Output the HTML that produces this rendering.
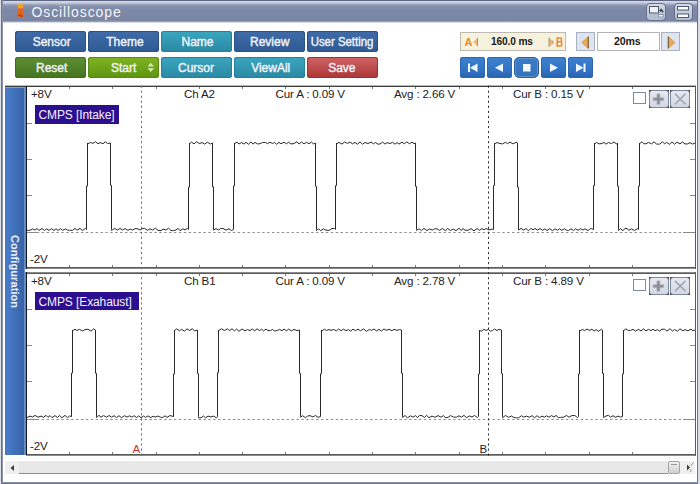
<!DOCTYPE html>
<html><head><meta charset="utf-8">
<style>
*{margin:0;padding:0;box-sizing:border-box}
html,body{width:700px;height:484px;overflow:hidden;background:#dcdfe6;font-family:"Liberation Sans",sans-serif}
.abs{position:absolute}
#win{position:absolute;left:0;top:0;width:700px;height:484px;background:linear-gradient(90deg,#dcdfe6 0,#dcdfe6 1px,#fff 1px,#fff 698px,#dcdfe6 698px)}
#title{position:absolute;left:3px;top:0;width:694px;height:23px;
 background:linear-gradient(#606888 0,#606888 1px,#d6dae6 1px,#c4cad8 3px,#9ea6bc 4.5px,#8692ae 6px,#7c88a6 10px,#7a86a4 21px,#b8c0d0 22px,#f4f5f8 23px)}
#title .t{position:absolute;left:28.5px;top:4px;font-size:14px;letter-spacing:0.9px;color:#f4f6fa;line-height:16px}
.lb{position:absolute;left:1px;top:0;width:2px;height:484px;background:linear-gradient(90deg,#69728e 0,#69728e 1px,#8a92aa 1px)}
.rb{position:absolute;left:697px;top:0;width:2px;height:484px;background:linear-gradient(90deg,#69728e 0,#69728e 1px,#d4d8e2 1px)}
.bb{position:absolute;left:1px;top:482px;width:697px;height:2px;background:linear-gradient(#8a92aa 0,#8a92aa 1px,#69728e 1px)}
.btn{position:absolute;width:71px;height:21px;border-radius:3px;color:#f2f6fa;font-weight:normal;-webkit-text-stroke:0.4px #eef2f8;font-size:12px;text-align:center;line-height:23px;white-space:nowrap}
.blue{background:linear-gradient(#3f6ba8,#2f5a93);box-shadow:inset 0 0 0 1px #2b5088}
.teal{background:linear-gradient(#3ba6bf,#2a88a3);box-shadow:inset 0 0 0 1px #26809a}
.green{background:linear-gradient(#5e8e34,#44741e);box-shadow:inset 0 0 0 1px #3e6c1c}
.lime{background:linear-gradient(#80b424,#5c940e);box-shadow:inset 0 0 0 1px #588a12}
.red{background:linear-gradient(#d06464,#ab3636);box-shadow:inset 0 0 0 1px #a03030}
.mb{position:absolute;top:57px;width:25px;height:21px;border-radius:3px;background:linear-gradient(#3d82cf,#3274c4 60%,#2862b2);box-shadow:inset 0 0 0 1px #2d66b4}
.side{position:absolute;left:5px;top:86px;width:21px;height:369px;background:linear-gradient(90deg,#4a7ac6 0,#4677c4 5px,#3f6cb6 12px,#3762a8 19px,#6a94c8 19px,#5a84bc 21px)}
.plotbox{position:absolute;left:26px;width:670px;background:#fff;border:1px solid #555b62;border-left:1px solid #1a2030}
.txt{position:absolute;font-size:11.6px;color:#222;white-space:nowrap;line-height:13px;letter-spacing:-0.15px}
.pbt{position:absolute;width:20px;height:18px;background:#3a4252}
.pbt>div{position:absolute;left:0;top:0;width:20px;height:18px;border-radius:3px;border:1px solid #7e889c;background:linear-gradient(#e6e9f0,#d2d7e2)}
.lbl{position:absolute;left:35px;height:18.5px;background:#2b0f8e;color:#f4f4fc;font-size:12px;line-height:21px;padding-left:3.5px;letter-spacing:-0.1px;white-space:nowrap}
</style></head><body>
<div id="win">
 <div id="title">
  <svg class="abs" style="left:13px;top:4px" width="9" height="15" viewBox="0 0 9 15">
   <path d="M2 1 Q2 0 3 0 L6 0 Q7 0 7 1 L7.5 4.5 L1.5 4.5 Z" fill="#f2a422"/>
   <path d="M1.5 4.5 L7.5 4.5 Q8.3 6 7.8 7.5 Q8.3 9 7.8 10.5 Q8.3 12.5 7 14 L2 14 Q0.7 12.5 1.2 10.5 Q0.7 9 1.2 7.5 Q0.7 6 1.5 4.5 Z" fill="#e8641e"/>
   <circle cx="3.3" cy="11.3" r="0.9" fill="#a02c10"/><circle cx="5.6" cy="12" r="0.9" fill="#a02c10"/><circle cx="4.6" cy="10" r="0.6" fill="#b83c14"/>
  </svg>
  <div class="t">Oscilloscope</div>
  <div class="abs" style="left:643px;top:3px;width:20px;height:18px;border-radius:4px;border:1px solid #66708c;background:linear-gradient(#d4dae6,#b4bed2)"></div>
  <div class="abs" style="left:670.5px;top:3px;width:19.5px;height:18px;border-radius:4px;border:1px solid #66708c;background:linear-gradient(#d4dae6,#b4bed2)"></div>
  <svg class="abs" style="left:643px;top:3px" width="48" height="18">
   <rect x="3.5" y="3.5" width="9" height="6.5" fill="#eef0f6" stroke="#4e586e" stroke-width="1"/>
   <path d="M13 7.5 L15.5 5 L15.5 6.5 Q17.5 6.5 17.5 9.5 L16.5 9.5 Q16.5 8 15.5 8 L15.5 9.5 Z" fill="#3a4458"/>
   <rect x="12.5" y="11.5" width="4.5" height="2.5" fill="#fafcff" stroke="#8a94a8" stroke-width="1"/>
   <path d="M3.5 12 h8 M3.5 14 h8" stroke="#a8b0c4" stroke-dasharray="1 1"/>
   <rect x="31.5" y="3.5" width="11" height="3.5" fill="#fbfcfe" stroke="#4e586e" stroke-width="1"/>
   <rect x="31.5" y="11" width="11" height="3.5" fill="#fbfcfe" stroke="#4e586e" stroke-width="1"/>
  </svg>
 </div>
 <div class="lb"></div><div class="rb"></div><div class="bb"></div>

 <div class="btn blue" style="left:15px;top:31px;padding-left:2.4px">Sensor</div>
 <div class="btn blue" style="left:88px;top:31px;padding-left:2.8px">Theme</div>
 <div class="btn teal" style="left:161px;top:31px;padding-left:2px">Name</div>
 <div class="btn blue" style="left:234px;top:31px;padding-left:0.4px">Review</div>
 <div class="btn blue" style="left:307px;top:31px;padding-right:1px"><span style="display:inline-block;transform:scaleX(0.95)">User Setting</span></div>
 <div class="btn green" style="left:15px;top:57px;padding-left:2.4px">Reset</div>
 <div class="btn lime" style="left:88px;top:57px;padding-left:0.4px">Start</div>
 <div class="btn teal" style="left:161px;top:57px;padding-right:1px">Cursor</div>
 <div class="btn teal" style="left:234px;top:57px;padding-left:2.4px">ViewAll</div>
 <div class="btn red" style="left:307px;top:57px;padding-right:1.4px">Save</div>

 <div class="abs" style="left:460px;top:32px;width:106px;height:19px;background:#f6f2de;border:1px solid #bdbab0"></div>
 <div class="abs" style="left:576px;top:32px;width:19px;height:19px;background:#dfe5f0;border:1px solid #aab2c2"></div>
 <div class="abs" style="left:597px;top:32px;width:63px;height:19px;background:#fff;border:1px solid #b4b4b4"></div>
 <div class="abs" style="left:661px;top:32px;width:19px;height:19px;background:#dfe5f0;border:1px solid #aab2c2"></div>
 <div class="txt" style="left:491px;top:35px;font-weight:bold;font-size:10.2px;color:#1a1a1a">160.0 ms</div>
 <div class="txt" style="left:614px;top:35px;font-weight:bold;font-size:10.6px;color:#1a1a1a">20ms</div>

 <div class="mb" style="left:460px"></div>
 <div class="mb" style="left:487px"></div>
 <div class="mb" style="left:514px;border-radius:6px;background:linear-gradient(#3c7cc6,#3472bc);box-shadow:inset 0 0 0 1px #2c5c98,inset 0 0 0 2px #5a94d2"></div>
 <div class="mb" style="left:541px"></div>
 <div class="mb" style="left:568px"></div>

 <div class="side"></div>
 <div class="abs" style="left:5px;top:87px;width:20px;height:1px;background:#78a0d6"></div>
 <div class="abs" style="left:5px;top:85px;width:691px;height:1px;background:#b8b8b8"></div>
 <div class="abs" style="left:5px;top:86px;width:691px;height:1px;background:#3e3e3e"></div>
 <div class="abs" style="left:26px;top:267px;width:670px;height:1px;background:#5a5a5a"></div>
 <div class="abs" style="left:26px;top:268px;width:670px;height:1px;background:#8a8a8a"></div>
 <div class="abs" style="left:26px;top:272px;width:670px;height:1px;background:#8a8a8a"></div>
 <div class="abs" style="left:26px;top:273px;width:670px;height:1px;background:#5a5a5a"></div>
 <div class="abs" style="left:26px;top:454px;width:670px;height:1px;background:#5a5a5a"></div>
 <div class="abs" style="left:26px;top:455px;width:670px;height:1px;background:#8a8a8a"></div>
 <div class="abs" style="left:26px;top:86px;width:1px;height:183px;background:#141828"></div>
 <div class="abs" style="left:26px;top:272px;width:1px;height:183px;background:#141828"></div>
 <div class="abs" style="left:25px;top:269px;width:2px;height:3px;background:#f4f8fc"></div>
 <div class="abs" style="left:695px;top:86px;width:1px;height:183px;background:#5a5a5a"></div>
 <div class="abs" style="left:695px;top:272px;width:1px;height:184px;background:#5a5a5a"></div>

 <svg class="abs" style="left:0;top:0" width="700" height="484">
  <line x1="69.5" y1="87" x2="69.5" y2="89" stroke="#7a7a7a"/><line x1="69.5" y1="265" x2="69.5" y2="267" stroke="#7a7a7a"/><line x1="112.5" y1="87" x2="112.5" y2="89" stroke="#7a7a7a"/><line x1="112.5" y1="265" x2="112.5" y2="267" stroke="#7a7a7a"/><line x1="156.5" y1="87" x2="156.5" y2="89" stroke="#7a7a7a"/><line x1="156.5" y1="265" x2="156.5" y2="267" stroke="#7a7a7a"/><line x1="199.5" y1="87" x2="199.5" y2="89" stroke="#7a7a7a"/><line x1="199.5" y1="265" x2="199.5" y2="267" stroke="#7a7a7a"/><line x1="242.5" y1="87" x2="242.5" y2="89" stroke="#7a7a7a"/><line x1="242.5" y1="265" x2="242.5" y2="267" stroke="#7a7a7a"/><line x1="285.5" y1="87" x2="285.5" y2="89" stroke="#7a7a7a"/><line x1="285.5" y1="265" x2="285.5" y2="267" stroke="#7a7a7a"/><line x1="329.5" y1="87" x2="329.5" y2="89" stroke="#7a7a7a"/><line x1="329.5" y1="265" x2="329.5" y2="267" stroke="#7a7a7a"/><line x1="372.5" y1="87" x2="372.5" y2="89" stroke="#7a7a7a"/><line x1="372.5" y1="265" x2="372.5" y2="267" stroke="#7a7a7a"/><line x1="415.5" y1="87" x2="415.5" y2="89" stroke="#7a7a7a"/><line x1="415.5" y1="265" x2="415.5" y2="267" stroke="#7a7a7a"/><line x1="459.5" y1="87" x2="459.5" y2="89" stroke="#7a7a7a"/><line x1="459.5" y1="265" x2="459.5" y2="267" stroke="#7a7a7a"/><line x1="502.5" y1="87" x2="502.5" y2="89" stroke="#7a7a7a"/><line x1="502.5" y1="265" x2="502.5" y2="267" stroke="#7a7a7a"/><line x1="545.5" y1="87" x2="545.5" y2="89" stroke="#7a7a7a"/><line x1="545.5" y1="265" x2="545.5" y2="267" stroke="#7a7a7a"/><line x1="589.5" y1="87" x2="589.5" y2="89" stroke="#7a7a7a"/><line x1="589.5" y1="265" x2="589.5" y2="267" stroke="#7a7a7a"/><line x1="632.5" y1="87" x2="632.5" y2="89" stroke="#7a7a7a"/><line x1="632.5" y1="265" x2="632.5" y2="267" stroke="#7a7a7a"/><line x1="27" y1="123.5" x2="32" y2="123.5" stroke="#8a8a8a"/><line x1="690" y1="123.5" x2="695" y2="123.5" stroke="#8a8a8a"/><line x1="27" y1="159.5" x2="32" y2="159.5" stroke="#8a8a8a"/><line x1="690" y1="159.5" x2="695" y2="159.5" stroke="#8a8a8a"/><line x1="27" y1="195.5" x2="32" y2="195.5" stroke="#8a8a8a"/><line x1="690" y1="195.5" x2="695" y2="195.5" stroke="#8a8a8a"/><line x1="27" y1="232.5" x2="695" y2="232.5" stroke="#8a8e98" stroke-dasharray="2.4 2.5"/><line x1="27" y1="232.5" x2="38" y2="232.5" stroke="#8a8a8a"/><line x1="683" y1="232.5" x2="695" y2="232.5" stroke="#8a8a8a"/><line x1="69.5" y1="274" x2="69.5" y2="276" stroke="#7a7a7a"/><line x1="69.5" y1="452" x2="69.5" y2="454" stroke="#7a7a7a"/><line x1="112.5" y1="274" x2="112.5" y2="276" stroke="#7a7a7a"/><line x1="112.5" y1="452" x2="112.5" y2="454" stroke="#7a7a7a"/><line x1="156.5" y1="274" x2="156.5" y2="276" stroke="#7a7a7a"/><line x1="156.5" y1="452" x2="156.5" y2="454" stroke="#7a7a7a"/><line x1="199.5" y1="274" x2="199.5" y2="276" stroke="#7a7a7a"/><line x1="199.5" y1="452" x2="199.5" y2="454" stroke="#7a7a7a"/><line x1="242.5" y1="274" x2="242.5" y2="276" stroke="#7a7a7a"/><line x1="242.5" y1="452" x2="242.5" y2="454" stroke="#7a7a7a"/><line x1="285.5" y1="274" x2="285.5" y2="276" stroke="#7a7a7a"/><line x1="285.5" y1="452" x2="285.5" y2="454" stroke="#7a7a7a"/><line x1="329.5" y1="274" x2="329.5" y2="276" stroke="#7a7a7a"/><line x1="329.5" y1="452" x2="329.5" y2="454" stroke="#7a7a7a"/><line x1="372.5" y1="274" x2="372.5" y2="276" stroke="#7a7a7a"/><line x1="372.5" y1="452" x2="372.5" y2="454" stroke="#7a7a7a"/><line x1="415.5" y1="274" x2="415.5" y2="276" stroke="#7a7a7a"/><line x1="415.5" y1="452" x2="415.5" y2="454" stroke="#7a7a7a"/><line x1="459.5" y1="274" x2="459.5" y2="276" stroke="#7a7a7a"/><line x1="459.5" y1="452" x2="459.5" y2="454" stroke="#7a7a7a"/><line x1="502.5" y1="274" x2="502.5" y2="276" stroke="#7a7a7a"/><line x1="502.5" y1="452" x2="502.5" y2="454" stroke="#7a7a7a"/><line x1="545.5" y1="274" x2="545.5" y2="276" stroke="#7a7a7a"/><line x1="545.5" y1="452" x2="545.5" y2="454" stroke="#7a7a7a"/><line x1="589.5" y1="274" x2="589.5" y2="276" stroke="#7a7a7a"/><line x1="589.5" y1="452" x2="589.5" y2="454" stroke="#7a7a7a"/><line x1="632.5" y1="274" x2="632.5" y2="276" stroke="#7a7a7a"/><line x1="632.5" y1="452" x2="632.5" y2="454" stroke="#7a7a7a"/><line x1="27" y1="309.5" x2="32" y2="309.5" stroke="#8a8a8a"/><line x1="690" y1="309.5" x2="695" y2="309.5" stroke="#8a8a8a"/><line x1="27" y1="345.5" x2="32" y2="345.5" stroke="#8a8a8a"/><line x1="690" y1="345.5" x2="695" y2="345.5" stroke="#8a8a8a"/><line x1="27" y1="381.5" x2="32" y2="381.5" stroke="#8a8a8a"/><line x1="690" y1="381.5" x2="695" y2="381.5" stroke="#8a8a8a"/><line x1="27" y1="419.5" x2="695" y2="419.5" stroke="#8a8e98" stroke-dasharray="2.4 2.5"/><line x1="27" y1="419.5" x2="38" y2="419.5" stroke="#8a8a8a"/><line x1="683" y1="419.5" x2="695" y2="419.5" stroke="#8a8a8a"/><line x1="141.5" y1="85.6" x2="141.5" y2="456" stroke="#c84856" stroke-dasharray="2.2 2.84"/><line x1="488.5" y1="85.6" x2="488.5" y2="456" stroke="#333" stroke-dasharray="2.2 2.84"/>
  <polyline fill="none" stroke="#2a2a2a" stroke-width="1" points="27.0,230.4 30.0,230.3 32.5,228.9 35.0,230.0 37.0,228.6 39.0,230.4 42.0,228.5 44.5,230.5 46.5,229.0 49.0,230.4 51.5,228.7 54.0,230.5 56.0,228.7 58.0,230.5 60.5,228.6 62.5,230.3 65.5,229.0 67.5,230.1 69.5,230.3 72.5,230.3 75.0,228.4 77.0,230.2 80.0,228.4 82.5,230.5 85.5,228.4 86.5,229.5 86.5,186.1 87.5,186.1 87.5,143.0 87.5,144.1 90.5,142.5 93.0,143.4 95.5,141.7 98.0,143.8 100.0,142.6 103.0,143.6 105.5,141.9 107.5,143.5 110.5,143.0 110.5,185.3 111.5,185.3 111.5,229.5 111.5,230.5 114.5,228.4 117.5,230.1 120.0,228.4 122.5,230.0 125.0,228.5 128.0,230.4 130.0,229.0 132.5,230.1 135.0,228.7 138.0,228.8 140.0,230.0 142.0,228.8 144.5,228.4 147.5,230.3 150.0,228.8 152.5,230.0 155.5,228.2 158.0,230.4 161.0,230.7 163.0,229.1 166.0,230.0 168.5,228.2 171.0,230.6 173.5,230.6 176.0,230.0 178.0,228.3 180.0,230.7 183.0,228.8 185.0,230.0 187.5,228.3 188.5,229.5 188.5,187.1 189.5,187.1 189.5,143.0 189.5,143.8 191.5,142.1 194.0,143.9 196.5,141.7 199.5,143.6 202.0,142.5 204.5,144.1 207.5,142.2 210.5,144.0 212.5,143.0 212.5,186.9 213.5,186.9 213.5,229.5 213.5,230.1 216.0,228.6 218.5,230.0 220.5,228.5 223.0,228.4 226.0,230.1 229.0,228.8 231.5,230.5 233.5,229.5 233.5,185.9 234.5,185.9 234.5,143.0 234.5,143.7 237.0,142.1 239.0,144.0 241.5,142.6 244.0,144.1 246.0,142.2 248.5,144.3 251.0,141.9 253.0,144.1 255.0,142.4 257.5,143.9 260.0,143.8 262.5,142.5 265.5,142.5 267.5,143.7 270.0,142.2 272.5,143.5 274.5,142.4 276.5,144.3 279.0,142.4 281.0,143.7 284.0,142.3 286.5,143.8 288.5,142.2 291.0,144.0 294.0,143.5 297.0,141.7 299.0,144.1 301.5,141.9 304.0,143.9 306.5,142.3 309.0,143.7 311.5,142.1 313.5,143.9 315.5,143.0 315.5,186.3 316.5,186.3 316.5,229.5 316.5,230.7 318.5,228.7 320.5,230.7 323.5,228.9 326.0,230.2 329.0,230.4 332.0,228.5 334.5,228.5 335.5,229.5 335.5,185.6 336.5,185.6 336.5,143.0 336.5,144.0 339.0,142.4 342.0,144.1 344.5,142.0 347.5,143.4 350.0,142.1 352.5,143.9 355.0,142.4 357.5,144.2 360.0,141.8 362.5,144.2 365.0,142.5 368.0,143.5 371.0,142.1 373.5,143.8 375.5,142.5 378.0,144.2 380.0,144.0 382.5,142.1 385.0,144.1 387.0,142.6 390.0,143.5 392.5,142.4 395.0,144.2 397.0,142.5 399.0,144.1 402.0,142.2 404.5,143.9 406.5,141.8 409.5,143.7 412.0,142.1 414.0,143.7 415.5,143.0 415.5,186.4 416.5,186.4 416.5,229.5 416.5,230.4 419.0,228.8 421.5,230.6 424.0,228.3 427.0,230.6 429.5,229.0 432.5,230.0 434.5,228.9 437.0,228.8 439.5,230.4 442.5,228.5 445.5,230.8 447.5,228.4 450.5,230.4 453.5,229.1 456.0,230.7 459.0,228.2 461.0,230.5 463.0,228.6 465.0,230.2 468.0,230.3 471.0,228.6 474.0,230.8 477.0,228.6 479.5,230.3 482.0,228.5 484.0,229.9 486.0,228.5 489.0,229.9 492.0,229.1 493.5,229.5 493.5,185.4 494.5,185.4 494.5,143.0 494.5,143.8 497.0,142.6 500.0,143.5 502.5,143.9 505.5,142.2 507.5,143.7 510.0,142.2 513.0,143.9 516.0,142.3 517.5,143.0 517.5,187.2 518.5,187.2 518.5,229.5 518.5,230.1 521.0,228.4 523.5,230.1 526.0,228.5 528.5,230.8 531.0,228.3 533.0,229.9 535.0,228.5 537.5,230.0 540.0,228.6 542.5,230.3 545.0,228.8 547.0,230.6 549.5,228.7 552.5,230.6 555.0,228.8 557.5,230.3 559.5,228.7 561.5,230.3 564.5,228.8 566.5,230.2 568.5,230.5 571.0,228.8 573.5,230.5 575.5,228.8 578.0,230.3 580.5,228.7 583.0,230.0 585.0,228.8 588.0,230.6 590.5,228.4 593.5,229.5 593.5,185.6 594.5,185.6 594.5,143.0 594.5,144.2 596.5,142.4 599.0,143.9 602.0,143.5 604.0,142.3 606.0,144.2 608.5,142.5 611.5,143.6 614.0,141.9 616.5,144.1 617.5,143.0 617.5,186.2 618.5,186.2 618.5,229.5 618.5,230.5 620.5,228.7 623.0,230.7 625.0,228.3 627.0,228.6 629.0,230.3 631.5,228.9 634.5,230.5 637.5,228.7 638.5,229.5 638.5,186.2 639.5,186.2 639.5,143.0 639.5,143.7 642.0,141.8 644.0,143.9 646.0,143.7 648.5,142.4 651.5,143.9 654.0,141.8 656.5,144.0 659.5,144.2 662.5,141.8 664.5,143.8 666.5,142.4 669.5,144.3 672.0,141.9 674.5,144.2 677.0,142.2 680.0,143.9 682.5,141.9 685.0,144.0 687.5,143.9 690.0,142.6 692.5,144.1 695.0,143.0"/>
  <polyline fill="none" stroke="#2a2a2a" stroke-width="1" points="27.0,417.5 30.0,416.1 32.5,417.0 35.0,415.4 38.0,417.2 41.0,416.1 43.5,417.3 46.0,415.3 48.0,417.3 50.0,415.6 52.0,417.6 55.0,415.6 57.5,417.5 59.5,415.4 62.0,417.8 65.0,415.4 67.5,417.7 69.5,416.0 71.5,416.6 71.5,373.0 72.5,373.0 72.5,330.0 72.5,330.9 75.0,329.2 77.0,330.5 79.5,329.4 82.5,330.9 85.0,329.6 88.0,329.2 91.0,331.2 93.5,328.9 95.5,330.0 95.5,373.3 96.5,373.3 96.5,416.6 96.5,417.6 99.0,415.3 101.0,417.2 103.5,415.6 106.5,417.2 109.0,415.5 111.5,417.2 114.0,415.7 116.5,417.5 119.0,415.7 121.5,417.7 124.5,415.7 127.0,417.1 129.5,415.8 132.0,417.2 134.0,415.7 136.5,417.5 138.5,415.9 141.0,417.7 143.5,416.0 145.5,417.4 148.0,415.9 151.0,417.6 153.0,416.1 155.0,417.1 158.0,416.0 160.5,417.2 162.5,417.6 165.0,415.8 167.0,417.4 170.0,415.5 173.5,416.6 173.5,374.0 174.5,374.0 174.5,330.0 174.5,330.8 176.5,328.8 179.5,330.8 181.5,329.3 184.5,331.1 187.0,328.8 189.5,330.5 192.5,328.7 194.5,330.9 197.5,330.0 197.5,373.6 198.5,373.6 198.5,416.6 198.5,417.8 201.0,417.8 203.5,416.0 205.5,417.8 208.0,416.1 211.0,417.0 213.5,416.2 216.5,417.8 217.5,416.6 217.5,372.6 218.5,372.6 218.5,330.0 218.5,330.6 221.5,328.8 224.5,330.5 227.5,328.8 229.5,330.6 232.0,328.8 234.5,330.9 236.5,329.0 239.0,331.3 242.0,329.0 245.0,330.8 247.5,329.5 250.0,330.6 252.5,328.9 254.5,330.9 257.0,328.8 259.5,330.6 261.5,329.2 263.5,330.9 266.0,329.1 268.0,330.5 270.5,330.6 272.5,329.4 274.5,331.0 277.5,330.4 279.5,329.4 282.0,330.7 284.0,329.1 286.5,330.9 288.5,329.1 291.5,330.9 294.0,329.4 297.0,330.6 299.5,330.0 299.5,373.4 300.5,373.4 300.5,416.6 300.5,417.2 302.5,415.7 305.5,417.7 307.5,416.1 310.0,415.6 313.0,417.0 315.5,415.5 318.0,417.3 320.5,416.6 320.5,373.7 321.5,373.7 321.5,330.0 321.5,331.1 324.5,329.2 326.5,330.5 329.0,329.5 331.0,330.4 333.5,329.5 336.5,330.8 338.5,329.0 341.0,330.7 343.5,329.2 346.0,330.7 348.5,329.6 350.5,331.1 353.0,329.2 355.5,330.7 358.0,329.2 360.5,330.8 363.5,328.9 366.5,331.3 369.5,329.4 371.5,330.4 374.0,329.0 376.5,330.9 379.0,329.4 381.5,331.1 384.0,328.9 386.0,330.4 389.0,329.2 392.0,330.7 394.0,329.3 397.0,330.4 399.5,329.6 401.5,330.0 401.5,373.3 402.5,373.3 402.5,416.6 402.5,417.5 405.0,415.5 407.5,417.8 410.5,415.8 413.0,417.2 415.5,415.6 417.5,417.7 419.5,415.5 422.0,415.6 424.5,417.5 426.5,415.3 429.0,417.7 432.0,416.1 435.0,417.3 438.0,415.6 441.0,417.2 443.5,415.6 445.5,417.7 448.0,417.4 450.5,415.6 453.5,417.1 456.5,417.2 459.0,415.8 461.5,417.1 464.0,415.4 466.5,417.7 469.5,415.9 472.0,417.0 474.5,415.5 477.5,417.6 478.5,416.6 478.5,374.0 479.5,374.0 479.5,330.0 479.5,330.7 481.5,331.1 484.0,329.3 486.0,330.5 488.5,329.4 490.5,331.2 492.5,330.6 494.5,329.0 497.0,330.6 499.0,329.3 501.5,330.0 501.5,373.7 502.5,373.7 502.5,416.6 502.5,417.7 505.5,415.5 508.5,417.3 511.5,416.0 514.0,417.6 516.5,417.8 518.5,417.8 521.5,415.7 523.5,417.1 526.5,416.2 529.5,417.2 532.0,415.6 534.5,417.8 537.0,415.7 539.5,417.6 542.0,416.1 544.5,417.2 546.5,415.8 549.0,417.2 551.5,415.6 554.0,417.0 556.0,415.4 558.5,417.7 560.5,417.4 563.5,417.2 566.5,415.5 569.0,417.2 572.0,415.5 575.0,415.6 577.5,417.7 578.5,416.6 578.5,374.0 579.5,374.0 579.5,330.0 579.5,331.2 582.5,329.5 584.5,330.6 587.0,329.0 589.5,330.5 592.0,329.1 594.0,331.2 596.0,329.6 598.5,331.3 601.5,329.2 602.5,330.0 602.5,373.4 603.5,373.4 603.5,416.6 603.5,417.6 606.0,416.0 608.5,415.3 610.5,417.2 613.0,415.7 615.5,417.3 618.0,416.1 620.5,417.1 622.5,416.6 622.5,373.9 623.5,373.9 623.5,330.0 623.5,331.1 625.5,328.8 628.5,330.6 630.5,330.4 633.0,329.3 635.5,331.1 638.5,329.3 641.0,330.9 643.5,328.9 646.0,330.9 648.5,329.3 651.0,330.7 653.0,329.2 655.0,330.7 657.5,329.6 659.5,331.1 662.0,329.2 664.5,329.2 667.0,331.1 670.0,328.7 672.5,331.1 674.5,329.5 677.5,331.2 680.0,328.8 683.0,330.9 685.0,329.5 688.0,330.8 691.0,329.1 693.0,330.9 695.0,330.0"/>
 </svg>


 <div class="txt" style="left:31px;top:87px">+8V</div>
 <div class="txt" style="left:30px;top:251.5px">-2V</div>
 <div class="txt" style="left:184px;top:87px">Ch A2</div>
 <div class="txt" style="left:275.5px;top:87px">Cur A : 0.09 V</div>
 <div class="txt" style="left:394px;top:87px">Avg : 2.66 V</div>
 <div class="txt" style="left:513px;top:87px">Cur B : 0.15 V</div>
 <div class="txt" style="left:31px;top:273.5px">+8V</div>
 <div class="txt" style="left:30px;top:438.5px">-2V</div>
 <div class="txt" style="left:184px;top:273.5px">Ch B1</div>
 <div class="txt" style="left:275.5px;top:273.5px">Cur A : 0.09 V</div>
 <div class="txt" style="left:394px;top:273.5px">Avg : 2.78 V</div>
 <div class="txt" style="left:513px;top:273.5px">Cur B : 4.89 V</div>
 <div class="txt" style="left:132.5px;top:442px;color:#c43434">A</div>
 <div class="txt" style="left:479.5px;top:442px;color:#222">B</div>
 <div class="abs" style="left:6px;top:86px;width:20px;height:369px;display:flex;align-items:center;justify-content:center"><div style="writing-mode:vertical-rl;color:#eef3fa;font-weight:bold;font-size:11px;letter-spacing:0.08px;margin-left:-2px;margin-top:2px">Configuration</div></div>

 <!-- plot buttons -->
 <div class="abs" style="left:633px;top:92px;width:13px;height:12px;border:1.5px solid #7d8aa6;background:#fff"></div><div class="pbt" style="left:649px;top:90px"><div></div><svg class="abs" style="left:0;top:1px" width="19" height="18"><path d="M7.8 2.8 h3.2 v3.8 h3.8 v3.2 h-3.8 v3.8 h-3.2 v-3.8 h-3.8 v-3.2 h3.8 z" fill="#8a8f9a" stroke="#c4c8d0" stroke-width="0.6"/></svg></div><div class="pbt" style="left:670px;top:90px"><div></div><svg class="abs" style="left:1px;top:1px" width="19" height="18"><path d="M4 2.8 L14.5 13.3 M14.5 2.8 L4 13.3" stroke="#9ca2ac" stroke-width="1.5"/></svg></div>
 <div class="abs" style="left:633px;top:279px;width:13px;height:12px;border:1.5px solid #7d8aa6;background:#fff"></div><div class="pbt" style="left:649px;top:277px"><div></div><svg class="abs" style="left:0;top:1px" width="19" height="18"><path d="M7.8 2.8 h3.2 v3.8 h3.8 v3.2 h-3.8 v3.8 h-3.2 v-3.8 h-3.8 v-3.2 h3.8 z" fill="#8a8f9a" stroke="#c4c8d0" stroke-width="0.6"/></svg></div><div class="pbt" style="left:670px;top:277px"><div></div><svg class="abs" style="left:1px;top:1px" width="19" height="18"><path d="M4 2.8 L14.5 13.3 M14.5 2.8 L4 13.3" stroke="#9ca2ac" stroke-width="1.5"/></svg></div>
 <!-- scrollbar -->
 <div class="abs" style="left:5px;top:458px;width:690px;height:1px;background:repeating-linear-gradient(90deg,#f0f1f4 0,#f0f1f4 2px,#fff 2px,#fff 4px)"></div>
 <div class="abs" style="left:5px;top:461px;width:690px;height:13px;background:#efefef"></div>
 <div class="abs" style="left:19px;top:461px;width:649px;height:13px;background:#e8e8e8;border-bottom:1px solid #8e8e8e"></div>
 <div class="abs" style="left:668px;top:461px;width:12px;height:13px;border:1px solid #a4a4a4;border-radius:2px;background:linear-gradient(#f2f2f2,#d0d0d0)"><div style="margin:2px 2px 0;height:1px;background:#9a9a9a"></div></div>
 <svg class="abs" style="left:9.5px;top:464.5px" width="5" height="6"><path d="M4 0 L0.5 3 L4 6 Z" fill="#3a3a3a"/></svg>
 <svg class="abs" style="left:686px;top:462px" width="9" height="11"><path d="M1 2.5 L4 5.5 L1 8.5 Z" fill="#3a3a3a"/><path d="M7.5 0.5 L4.5 4 M5 7 L4.5 10" stroke="#9a9a9a"/></svg>
 <!-- media icons -->
 <svg class="abs" style="left:460px;top:57px" width="134" height="21" fill="#f4f8fc">
  <rect x="8" y="6.5" width="2" height="8.5"/><path d="M10 10.75 L17.5 6.5 L17.5 15 Z"/>
  <path d="M35 10.75 L43 6.5 L43 15 Z"/>
  <rect x="63" y="7" width="7.5" height="7.5"/>
  <path d="M90 6.5 L98 10.75 L90 15 Z"/>
  <path d="M116 6.5 L123.5 10.75 L116 15 Z"/><rect x="123.5" y="6.5" width="2" height="8.5"/>
 </svg>
 <!-- A/B arrows -->
 <div class="txt" style="left:464.5px;top:36px;font-size:11px;color:#ee8a22;font-weight:bold">A</div>
 <svg class="abs" style="left:473px;top:37px" width="6" height="10"><path d="M4.5 0.8 L0.5 5 L4.5 9.2 Z" fill="#f0b474"/><path d="M4.5 0.8 L4.5 9.2" stroke="#9aa078" stroke-width="1"/></svg>
 <svg class="abs" style="left:548px;top:37px" width="7" height="11"><path d="M1 0.5 L6 5.2 L1 9.9 Z" fill="#eeb274"/><path d="M1 0.5 L1 9.9" stroke="#9aa078" stroke-width="1"/><path d="M6 5.2 L4 3.3 M6 5.2 L4 7.1" stroke="#8a9aa0" stroke-width="0.6"/></svg>
 <svg class="abs" style="left:556px;top:36.5px" width="8" height="11"><path d="M1.2 1 H4.3 Q5.5 1 5.5 2.2 V3.6 Q5.5 4.7 4.6 4.7 Q5.7 4.7 5.7 5.9 V7.7 Q5.7 9 4.4 9 H1.2 Z M1.2 4.7 H4.6" fill="none" stroke="#ee8426" stroke-width="1.5"/></svg>
 <svg class="abs" style="left:581px;top:36px" width="9" height="13"><path d="M7.5 0.5 L0.8 6.5 L7.5 12.5 Z" fill="#eaa852" stroke="#c89048" stroke-width="0.7"/><path d="M7.3 0.8 L7.3 12.2" stroke="#7a6448" stroke-width="1.2"/></svg>
 <svg class="abs" style="left:667px;top:36px" width="9" height="13"><path d="M1.2 0.5 L7.9 6.5 L1.2 12.5 Z" fill="#eaa852" stroke="#c89048" stroke-width="0.7"/><path d="M1.4 0.8 L1.4 12.2" stroke="#7a6448" stroke-width="1.2"/></svg>
 <!-- Start spinner -->
 <svg class="abs" style="left:146.5px;top:62px" width="8" height="11" fill="#d6e8b4"><path d="M0.5 4.5 L3.75 0.8 L7 4.5 Z"/><path d="M0.5 6.3 L3.75 10 L7 6.3 Z"/></svg>
 <div class="lbl" style="top:105px;width:84px">CMPS [Intake]</div>
 <div class="lbl" style="top:292px;width:103.8px;height:18px">CMPS [Exahaust]</div>
</div>
</body></html>
